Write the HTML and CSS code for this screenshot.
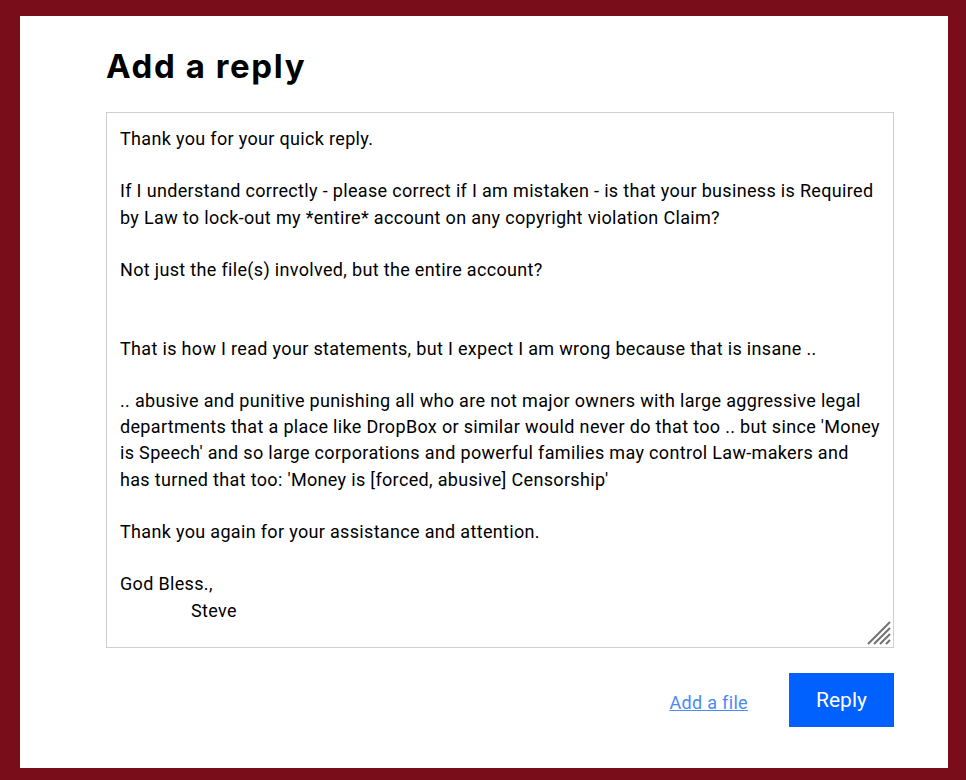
FILE: index.html
```html
<!DOCTYPE html>
<html lang="en">
<head>
<meta charset="utf-8">
<title>Add a reply</title>
<link rel="stylesheet" href="styles.css">
</head>
<body>
<main class="panel">
  <h1 class="title">Add a reply</h1>
  <form class="reply-form">
    <div class="field">
      <textarea class="message" wrap="off" aria-label="Reply">Thank you for your quick reply.

If I understand correctly - please correct if I am mistaken - is that your business is Required
by Law to lock-out my *entire* account on any copyright violation Claim?

Not just the file(s) involved, but the entire account?


That is how I read your statements, but I expect I am wrong because that is insane ..

.. abusive and punitive punishing all who are not major owners with large aggressive legal
departments that a place like DropBox or similar would never do that too .. but since 'Money
is Speech' and so large corporations and powerful families may control Law-makers and
has turned that too: 'Money is [forced, abusive] Censorship'

Thank you again for your assistance and attention.

God Bless.,
	Steve</textarea>
      <svg class="grip" width="24" height="24" viewBox="0 0 24 24" aria-hidden="true">
        <g stroke="#707070" stroke-width="2" stroke-linecap="butt">
          <line x1="1" y1="23" x2="23" y2="1"/>
          <line x1="7" y1="23" x2="23" y2="7"/>
          <line x1="13" y1="23" x2="23" y2="13"/>
          <line x1="19" y1="23" x2="23" y2="19"/>
        </g>
      </svg>
    </div>
    <div class="actions">
      <a class="add-file" href="#">Add a file</a>
      <button class="reply-btn" type="button">Reply</button>
    </div>
  </form>
</main>
</body>
</html>
```
FILE: styles.css
```css
html, body {
  margin: 0;
  padding: 0;
}
body {
  background: #7a0d1a;
  width: 966px;
  height: 780px;
  overflow: hidden;
}
.panel {
  box-sizing: border-box;
  margin: 16px 18px 0 20px;
  width: 928px;
  height: 752px;
  background: #ffffff;
  padding: 30px 54px 0 86px;
}
.title {
  margin: 0;
  font-family: Inter, "Liberation Sans", sans-serif;
  font-weight: 700;
  font-size: 33px;
  line-height: 40px;
  letter-spacing: 1.6px;
  color: #000000;
  height: 66px;
}
.reply-form {
  display: flex;
  flex-direction: column;
}
.field {
  position: relative;
  width: 788px;
  height: 536px;
}
.message {
  box-sizing: border-box;
  display: block;
  width: 788px;
  height: 536px;
  margin: 0;
  border: 1px solid #cfcfcf;
  border-radius: 0;
  padding: 13px 13px 12px;
  font-family: Roboto, "Liberation Sans", sans-serif;
  font-size: 18px;
  line-height: 26.2px;
  letter-spacing: 0.33px;
  color: #000000;
  tab-size: 71px;
  overflow: hidden;
  resize: none;
  outline: none;
  background: #ffffff;
}
.grip {
  position: absolute;
  right: 3px;
  bottom: 3px;
  pointer-events: none;
}
.actions {
  display: flex;
  justify-content: flex-end;
  align-items: center;
  gap: 41px;
  margin-top: 25px;
}
.add-file {
  font-family: Roboto, "Liberation Sans", sans-serif;
  font-size: 18px;
  letter-spacing: 0.33px;
  color: #4a8af2;
  text-decoration: underline;
  padding-top: 4px;
}
.reply-btn {
  width: 105px;
  height: 54px;
  border: none;
  border-radius: 0;
  background: #0061fe;
  color: #ffffff;
  font-family: Roboto, "Liberation Sans", sans-serif;
  font-size: 21px;
  padding: 0;
  cursor: pointer;
}
```
